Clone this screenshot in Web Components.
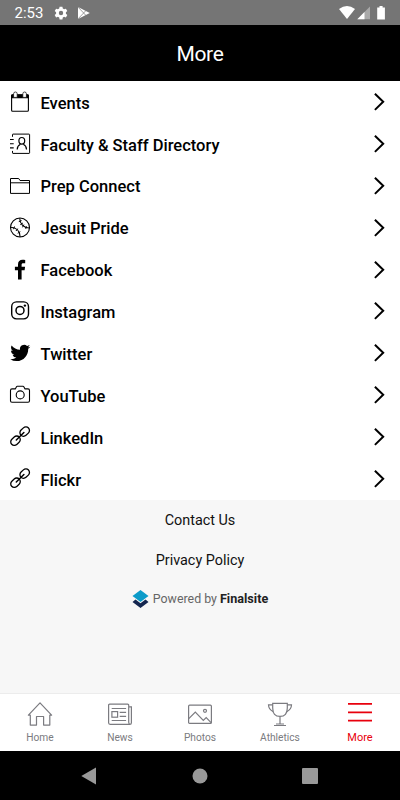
<!DOCTYPE html>
<html lang="en">
<head>
<meta charset="UTF-8">
<meta name="viewport" content="width=device-width, initial-scale=1">
<title>More</title>
<style>
    body {
        margin: 0;
        font-family: Roboto, "Liberation Sans", sans-serif;
        background: #fff;
    }
</style>
</head>
<body>
<app-screen>
    <status-bar slot="top" time="2:53"></status-bar>
    <title-bar slot="top">More</title-bar>

    <menu-row icon="calendar">Events</menu-row>
    <menu-row icon="directory">Faculty &amp; Staff Directory</menu-row>
    <menu-row icon="folder">Prep Connect</menu-row>
    <menu-row icon="baseball">Jesuit Pride</menu-row>
    <menu-row icon="facebook">Facebook</menu-row>
    <menu-row icon="instagram">Instagram</menu-row>
    <menu-row icon="twitter">Twitter</menu-row>
    <menu-row icon="camera">YouTube</menu-row>
    <menu-row icon="link">LinkedIn</menu-row>
    <menu-row icon="link">Flickr</menu-row>

    <page-footer slot="footer">
        <span>Contact Us</span>
        <span>Privacy Policy</span>
        <powered-by slot="brand" name="Finalsite">Powered by</powered-by>
    </page-footer>

    <tab-bar slot="bottom">
        <tab-item icon="home">Home</tab-item>
        <tab-item icon="news">News</tab-item>
        <tab-item icon="photos">Photos</tab-item>
        <tab-item icon="trophy">Athletics</tab-item>
        <tab-item icon="menu" active>More</tab-item>
    </tab-bar>
    <system-nav slot="bottom"></system-nav>
</app-screen>

<script>
// Icon drawings: [viewBox, markup]. Strokes use currentColor.
const icons = {
    calendar: ['0 0 20 20', `
        <rect x="1.6" y="3" width="16.8" height="16.2" rx="1" fill="none" stroke="currentColor" stroke-width="1.1"/>
        <path d="M1.1 6.2V3.2q0-.9 1-.9h15.8q1 0 1 .9v3z" fill="currentColor"/>
        <g fill="#fff" stroke="currentColor" stroke-width=".7">
            <path d="M3.6 5.4V1.8a1.8 1.8 0 0 1 3.6 0v3.6zM12.8 5.4V1.8a1.8 1.8 0 0 1 3.6 0v3.6z"/>
        </g>`],
    directory: ['0 0 20 20', `
        <g fill="none" stroke="currentColor">
            <path d="M2.5 2.8V.5q0-.4.5-.4h16q.6 0 .6.5v18.2q0 .6-.6.6H3q-.5 0-.5-.5v-2" stroke-width="1"/>
            <path d="M0 5.5h3.7M0 9.7h3.7M0 13.9h3.7" stroke-width="1.1"/>
            <ellipse cx="11.8" cy="6.8" rx="2.9" ry="3.3" stroke-width="1.2"/>
            <path d="M7.2 15.4c.1-3 1.1-4.2 3.2-5.2M16.5 15.4c-.1-3-1.1-4.2-3.2-5.2" stroke-width="1.2"/>
        </g>`],
    folder: ['0 0 20 20', `
        <path d="M.5 17.4V2.500h8.200l1.300 2h9.500v12.900zM.5 6.800h19" fill="none" stroke="currentColor" stroke-width="1"/>`],
    baseball: ['0 0 20 20', `
        <g fill="none" stroke="currentColor" stroke-width="1.1">
            <circle cx="10" cy="9.5" r="9.5"/>
            <path d="M9.7.2c.1 5.3 3.8 9.6 9.7 9.8M.6 9.2c5.8.1 9.3 4.1 9.5 9.7"/>
            <path d="M8.8 3.6l2.8-1M10.3 6.7l2.6-1.7M12.5 9.3l1.4-2.7M15.8 10.9l.5-2.8M3.5 11.2l1-2.7M6 13l1.7-2.4M7.7 15.3l2.6-1.6" stroke-width="1"/>
        </g>`],
    facebook: ['0 0 20 20', `
        <path d="M8 19.5v-9.2H4.9V6.7H8V4.4C8 1.4 9.8-.2 12.5-.2c1.3 0 2.3.1 2.7.2v3.2h-1.9c-1.4 0-1.7.7-1.7 1.7v1.8h3.5l-.5 3.6h-3v9.2z" fill="currentColor"/>`],
    instagram: ['0 0 20 20', `
        <g fill="none" stroke="currentColor">
            <rect x="1.7" y=".9" width="16.8" height="17" rx="4.8" stroke-width="1.4"/>
            <circle cx="10" cy="9.4" r="4" stroke-width="1.5"/>
        </g>
        <circle cx="14.9" cy="4.6" r="1.2" fill="currentColor"/>`],
    twitter: ['0 -1.3 24 24', `
        <path d="M23.95 4.57a10 10 0 0 1-2.82.77 4.96 4.96 0 0 0 2.16-2.72c-.95.56-2 .96-3.13 1.19a4.92 4.92 0 0 0-8.38 4.48C7.69 8.1 4.07 6.13 1.64 3.16a4.82 4.82 0 0 0-.67 2.48c0 1.71.87 3.21 2.19 4.1a4.9 4.9 0 0 1-2.23-.62v.06a4.92 4.92 0 0 0 3.95 4.83 5 5 0 0 1-2.21.08 4.94 4.94 0 0 0 4.6 3.42A9.87 9.87 0 0 1 0 19.54a13.99 13.99 0 0 0 7.55 2.21c9.05 0 14-7.5 14-13.99 0-.21 0-.42-.02-.63a9.94 9.94 0 0 0 2.46-2.55z" fill="currentColor" transform="translate(.3 -1.4)"/>`],
    camera: ['0 0 20 20', `
        <g fill="none" stroke="currentColor" stroke-width="1.1">
            <path d="M2 3.9h3.3l1.2-2.1q.3-.5.8-.5h5.7q.5 0 .8.5L15 3.9h3q1.5 0 1.5 1.5v10.3q0 1.500-1.500 1.500H2q-1.500 0-1.500-1.500V5.400Q.5 3.900 2 3.900z"/>
            <circle cx="10.2" cy="9.9" r="4"/>
        </g>`],
    link: ['0 0 20 20', `
        <g fill="none" stroke="currentColor" stroke-width="1.3" stroke-linecap="round">
            <rect x="-5.2" y="-3.6" width="10.4" height="7.2" rx="3.6" transform="translate(14.7 4.6) rotate(-43)"/>
            <rect x="-5.2" y="-3.6" width="10.4" height="7.2" rx="3.6" transform="translate(5.5 13.7) rotate(-43)"/>
            <path d="M6.3 13L13.9 5.5" stroke-width="1.5"/>
        </g>`],
    chevron: ['0 0 12 20', `
        <path d="M1.9 1.7L10.2 9.8l-8.3 8.1" fill="none" stroke="currentColor" stroke-width="2"/>`],
    home: ['0 0 24 24', `
        <path d="M.4 13.2L12 .8l11.6 12.4h-1.8v9.9h-6.2v-8.600H8.500v8.600H2.300v-9.900z" fill="none" stroke="currentColor" stroke-width="1.2" stroke-linejoin="round"/>`],
    news: ['0 0 24 24', `
        <g fill="none" stroke="currentColor" stroke-width="1.2">
            <path d="M20.7 20.5V3.2q0-1-1-1H1.6q-1 0-1 1v17.6q0 1.5 1.5 1.5h19.7q1.6 0 1.6-1.6V4.9h-2.7M20.7 20q0 1.8 1.2 2.3"/>
            <path d="M3.7 6.5h14.4M11.7 10.4h6.4M11.7 14.4h6.4M3.7 18.5h14.4"/>
            <rect x="3.9" y="9.6" width="5.7" height="5.6"/>
        </g>`],
    photos: ['0 0 24 24', `
        <g fill="none" stroke="currentColor" stroke-width="1.2">
            <rect x=".6" y="3.2" width="22.8" height="18.2" rx="1"/>
            <circle cx="17" cy="8.8" r="1.5"/>
            <path d="M.8 16.7L7.3 10l8 8.4 2.9-2.9 5.1 5.3"/>
        </g>`],
    trophy: ['0 0 24 24', `
        <g fill="none" stroke="currentColor" stroke-width="1.2">
            <path d="M4.7 1.4h14.6v4.5q0 8.5-7.3 8.5T4.7 5.9zM12 14.4v7.5M8 22h8M6 23.5h12"/>
            <path d="M4.7 2.8H.5q.1 4.9 4.8 6.8M19.3 2.8h4.2q-.1 4.9-4.8 6.8"/>
        </g>`],
    menu: ['0 0 24 24', `
        <path d="M0 1.9h24M0 10.3h24M0 18.6h24" fill="none" stroke="currentColor" stroke-width="1.8"/>`]
};

// Attaches an open shadow root filled with the given markup
function render(host, html) {
    host.attachShadow({ mode: 'open' }).innerHTML = html;
}

class UiIcon extends HTMLElement {
    constructor() {
        super();
        const [box, markup] = icons[this.getAttribute('name')];
        render(this, `
            <style>
                :host { display: block; flex: none; }
                svg { display: block; width: 100%; height: 100%; overflow: visible; }
            </style>
            <svg viewBox="${box}" aria-hidden="true">${markup}</svg>
        `);
    }
}
customElements.define('ui-icon', UiIcon);

class AppScreen extends HTMLElement {
    constructor() {
        super();
        render(this, `
            <style>
                :host {
                    display: flex;
                    flex-direction: column;
                    height: 800px;
                    overflow: hidden;
                }
                main {
                    flex: 1;
                    display: flex;
                    flex-direction: column;
                    min-height: 0;
                    background: #f7f7f7;
                }
            </style>
            <slot name="top"></slot>
            <main>
                <slot></slot>
                <slot name="footer"></slot>
            </main>
            <slot name="bottom"></slot>
        `);
    }
}
customElements.define('app-screen', AppScreen);

class StatusBar extends HTMLElement {
    constructor() {
        super();
        render(this, `
            <style>
                :host {
                    display: flex;
                    flex: none;
                    align-items: center;
                    box-sizing: border-box;
                    height: 24.5px;
                    padding: 1px 14px 0 14.5px;
                    background: #757575;
                    color: #fff;
                    font-size: 15px;
                }
                span { width: 28.5px; padding-top: 1px; }
                svg { display: block; }
                .left { margin-left: 11px; }
                .right { margin-left: auto; }
            </style>
            <span>${this.getAttribute('time')}</span>
            <svg class="left" width="38" height="14" viewBox="0 0 38 14">
                <path fill="#fff" fill-rule="evenodd" d="M5.6.7h2.8l.4 1.8 1.3.8 1.8-.6 1.4 2.3-1.4 1.3v1.5l1.4 1.3-1.4 2.3-1.8-.6-1.3.8-.4 1.8H5.6l-.4-1.8-1.3-.8-1.8.6L.7 9.1l1.4-1.3V6.3L.7 5l1.4-2.3 1.8.6 1.3-.8zM7 4.8a2.2 2.2 0 1 0 0 4.4 2.2 2.2 0 0 0 0-4.4z"/>
                <path fill="#fff" d="M24 1.1L35.8 7 24 12.9z"/>
                <path fill="none" stroke="#757575" stroke-width=".7" d="M24 1.1L32 9.5M24 12.9L32 4.5"/>
            </svg>
            <svg class="right" width="47" height="14" viewBox="0 0 47 14">
                <path fill="#fff" d="M0 2.9Q8-2.9 16 2.9L8 12.9z"/>
                <path fill="#a9a9a9" d="M31 .5v12.7H18.3z"/>
                <path fill="#fff" d="M25.5 6v7.2h-7.2z"/>
                <path fill="#fff" d="M38.2 1.6h2.3V0h3.1v1.6h2.3v11.8h-7.7z"/>
            </svg>
        `);
    }
}
customElements.define('status-bar', StatusBar);

class TitleBar extends HTMLElement {
    constructor() {
        super();
        render(this, `
            <style>
                :host {
                    display: flex;
                    flex: none;
                    align-items: center;
                    justify-content: center;
                    box-sizing: border-box;
                    height: 56.5px;
                    padding-top: 3px;
                    background: #000;
                    color: #fff;
                    font-size: 21px;
                    letter-spacing: -.4px;
                }
            </style>
            <slot></slot>
        `);
    }
}
customElements.define('title-bar', TitleBar);

class MenuRow extends HTMLElement {
    constructor() {
        super();
        render(this, `
            <style>
                :host {
                    display: flex;
                    flex: none;
                    align-items: center;
                    box-sizing: border-box;
                    height: 41.9px;
                    padding: 0 15px 0 10px;
                    background: #fff;
                    color: #000;
                    font-size: 16.5px;
                    font-weight: 500;
                }
                .icon { width: 20px; height: 20px; }
                .label { flex: 1; margin-left: 10.5px; padding-top: 2.4px; }
                .chevron { width: 12px; height: 20px; }
            </style>
            <ui-icon class="icon" name="${this.getAttribute('icon')}"></ui-icon>
            <span class="label"><slot></slot></span>
            <ui-icon class="chevron" name="chevron"></ui-icon>
        `);
    }
}
customElements.define('menu-row', MenuRow);

class PageFooter extends HTMLElement {
    constructor() {
        super();
        render(this, `
            <style>
                :host {
                    display: flex;
                    flex-direction: column;
                    align-items: center;
                    padding-top: 1.5px;
                    color: #111;
                    font-size: 14.4px;
                }
                ::slotted(span) { line-height: 40px; }
            </style>
            <slot></slot>
            <slot name="brand"></slot>
        `);
    }
}
customElements.define('page-footer', PageFooter);

class PoweredBy extends HTMLElement {
    constructor() {
        super();
        render(this, `
            <style>
                :host {
                    display: flex;
                    align-items: center;
                    height: 35px;
                    color: #666;
                    font-size: 12.4px;
                    white-space: nowrap;
                }
                svg { display: block; margin-right: 4px; }
                b { margin-left: 3px; color: #222; font-size: 12.6px; font-weight: 700; }
            </style>
            <svg width="17" height="18" viewBox="0 0 17 18">
                <path fill="#14264f" d="M3.5 9.5L.5 12l8 6 8-6-3-2.5-5 3.7z"/>
                <path fill="#0c9bc9" d="M8.5 0l8 6-8 6-8-6z"/>
            </svg>
            <slot></slot><b>${this.getAttribute('name')}</b>
        `);
    }
}
customElements.define('powered-by', PoweredBy);

class TabBar extends HTMLElement {
    constructor() {
        super();
        render(this, `
            <style>
                :host {
                    display: grid;
                    flex: none;
                    grid-template-columns: repeat(5, 1fr);
                    box-sizing: border-box;
                    height: 58px;
                    border-top: 1px solid #ececec;
                    background: #fff;
                }
            </style>
            <slot></slot>
        `);
    }
}
customElements.define('tab-bar', TabBar);

class TabItem extends HTMLElement {
    constructor() {
        super();
        render(this, `
            <style>
                :host {
                    display: flex;
                    flex-direction: column;
                    align-items: center;
                    padding-top: 8px;
                    color: #7b7b80;
                    font-size: 10.2px;
                    line-height: 14px;
                }
                :host([active]) { color: #e8000d; font-size: 11px; }
                ui-icon { width: 24px; height: 24px; margin-bottom: 5px; }
            </style>
            <ui-icon name="${this.getAttribute('icon')}"></ui-icon>
            <slot></slot>
        `);
    }
}
customElements.define('tab-item', TabItem);

class SystemNav extends HTMLElement {
    constructor() {
        super();
        render(this, `
            <style>
                :host {
                    display: flex;
                    flex: none;
                    align-items: center;
                    justify-content: center;
                    gap: 94px;
                    height: 49px;
                    background: #000;
                }
                svg { display: block; width: 16px; height: 16px; overflow: visible; fill: #999; }
            </style>
            <svg viewBox="0 0 16 16"><path d="M-.7 8L14-.4v16.8z"/></svg>
            <svg viewBox="0 0 16 16"><circle cx="8" cy="8" r="7.5"/></svg>
            <svg viewBox="0 0 16 16"><rect x="0" y="0" width="16" height="16" rx="1"/></svg>
        `);
    }
}
customElements.define('system-nav', SystemNav);
</script>
</body>
</html>
